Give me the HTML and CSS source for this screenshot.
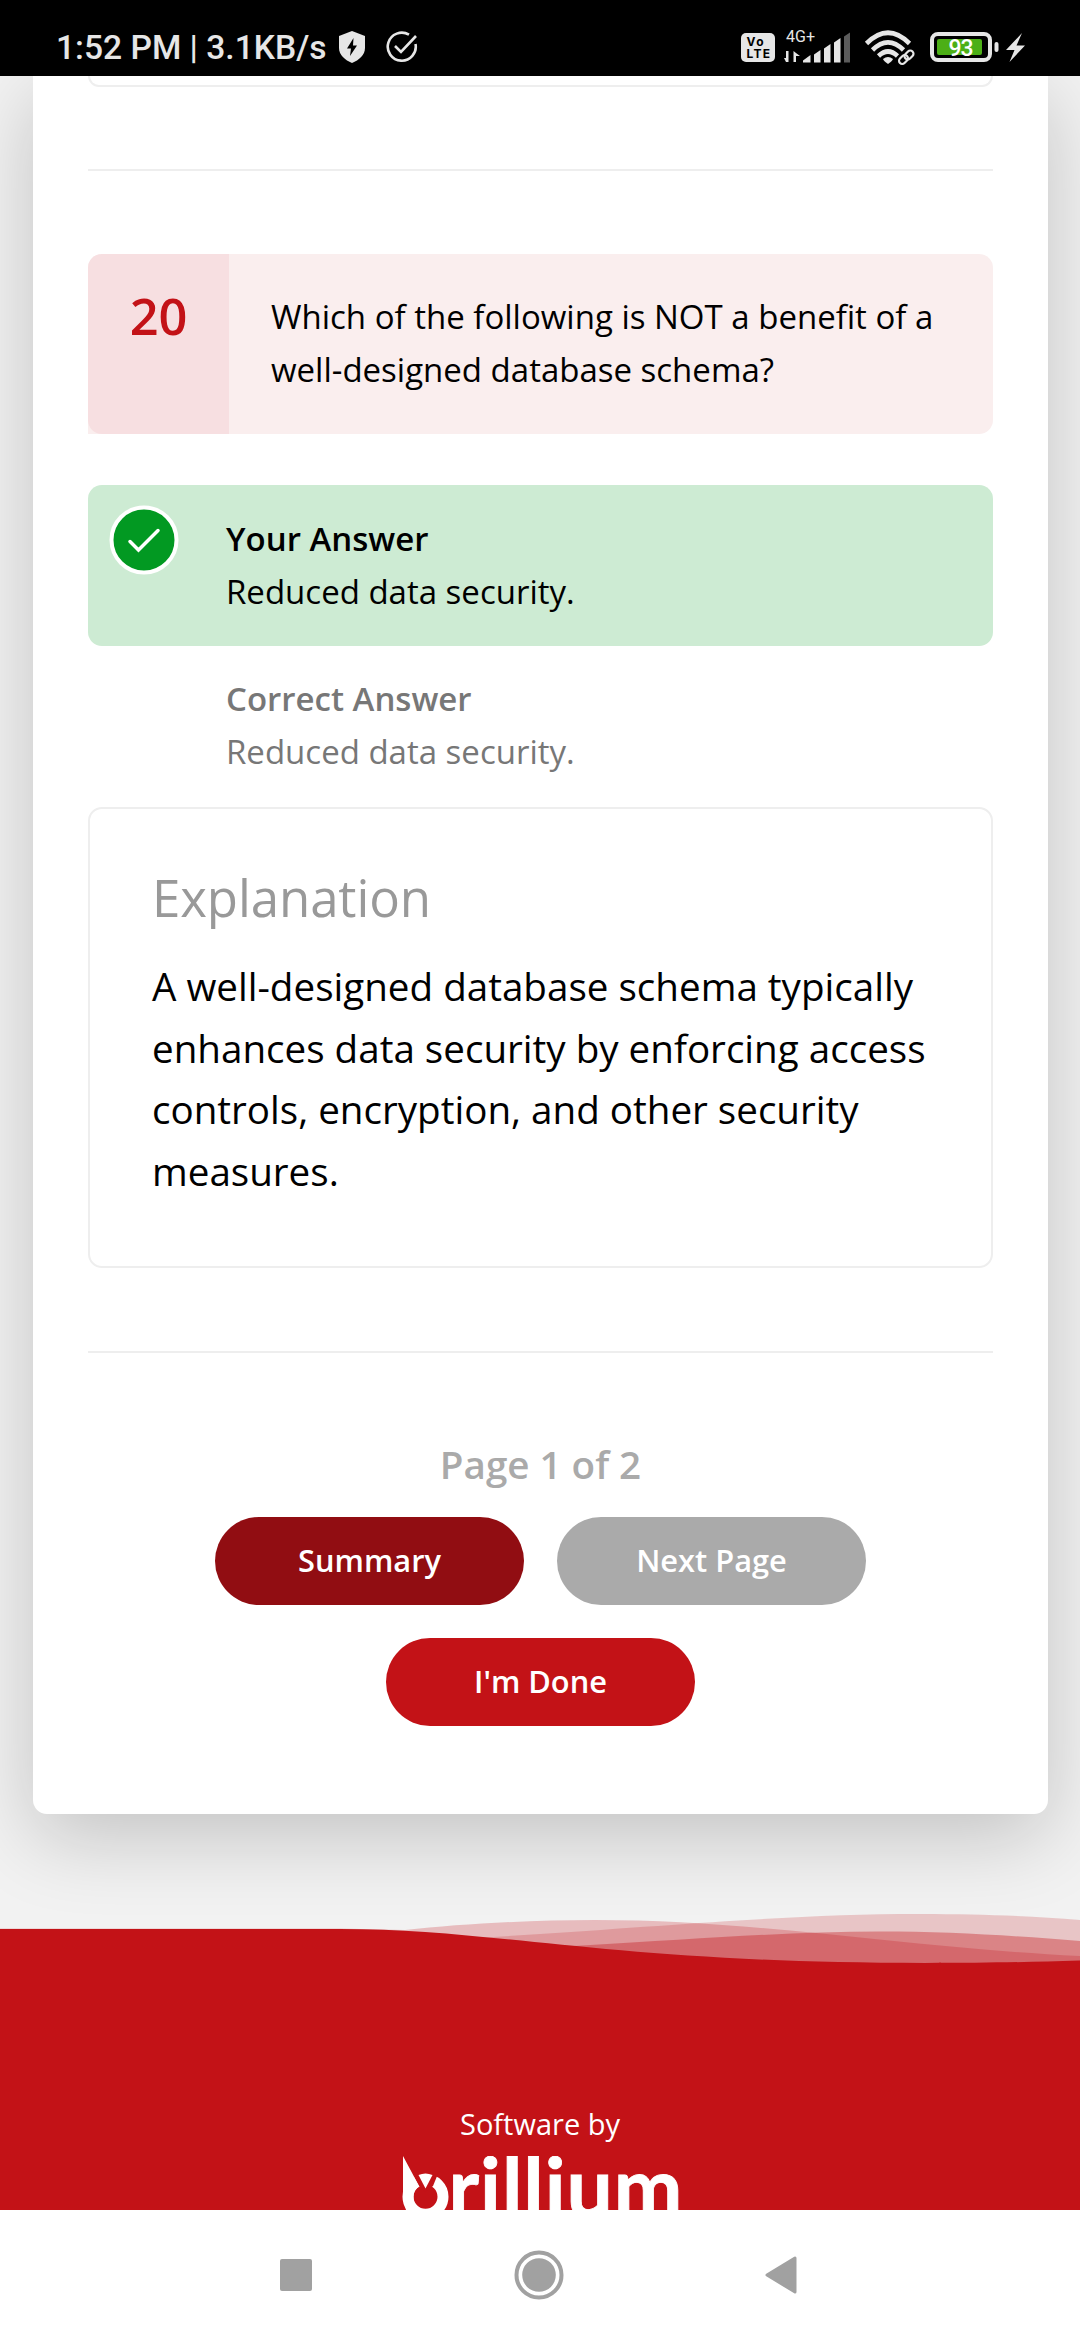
FILE: index.html
```html
<!DOCTYPE html>
<html lang="en">
<head>
<meta charset="utf-8">
<title>Results</title>
<link rel="stylesheet" href="styles.css">
</head>
<body>
<header class="status">
  <span class="clock">1:52 PM | 3.1KB/s</span>
  <svg class="shield" width="28" height="32" viewBox="0 0 28 32"><path d="M14 0 27 5V17C27 24 21 29 14 32 7 29 1 24 1 17V5Z" fill="#e6e6e6"/><path d="M15.5 7 9 17.5H13L12 25 19 14.5H15Z" fill="#000"/></svg>
  <svg class="done" width="32" height="32" viewBox="0 0 32 32" fill="none" stroke="#e6e6e6" stroke-width="2.6"><path d="M23 3.7A14 14 0 1 0 29.5 13"/><path d="m9 15 6 6L30 5"/></svg>
  <svg class="indicators" width="300" height="46" viewBox="0 0 300 46">
    <rect x="6" y="11" width="34" height="29" rx="5" fill="#e6e6e6"/>
    <text class="volte" x="11.5" y="23.600" textLength="17">Vo</text>
    <text class="volte" x="11.5" y="36.300" textLength="23.500">LTE</text>
    <text class="net" x="51" y="20" textLength="29">4G+</text>
    <g fill="#e6e6e6">
      <path d="M53.500 29V40H51L49 36H51V29ZM58.500 40V29L61 31 65 34H61V40ZM68 38.500 75.500 33V40.500H68ZM79 32.500 85.500 28V40.500H79ZM89 26.500 95.500 22V40.500H89ZM99 20.500 105.500 16V40.500H99Z"/>
      <path d="M109 14.500 115 10.500V40.500H109Z" fill="#5c5c5c"/>
    </g>
    <g fill="none" stroke="#e6e6e6" stroke-width="4.600">
      <path d="M131.500 21.500Q153 0 174.500 21.500M137.500 28Q153 12.500 168.500 28M143.500 34Q153 25 162.500 34"/>
    </g>
    <path d="M148 37Q153 33 158 37Q157.500 39 153 42Q148.500 39 148 37Z" fill="#e6e6e6"/>
    <g fill="none" stroke="#000" stroke-width="5"><rect x="-5" y="-3.200" width="10" height="6.400" rx="3.200" transform="translate(168.500 37.500) rotate(-45)"/><rect x="-5" y="-3.200" width="10" height="6.400" rx="3.200" transform="translate(174 33) rotate(-45)"/></g>
    <g fill="none" stroke="#e6e6e6" stroke-width="2.200"><rect x="-5" y="-3.200" width="10" height="6.400" rx="3.200" transform="translate(168.500 37.500) rotate(-45)"/><rect x="-5" y="-3.200" width="10" height="6.400" rx="3.200" transform="translate(174 33) rotate(-45)"/></g>
    <rect x="197" y="12" width="58" height="26" rx="6" fill="none" stroke="#e6e6e6" stroke-width="4"/>
    <rect x="202" y="17" width="45" height="16" rx="2" fill="#4caf16"/>
    <rect x="259.500" y="20" width="4" height="10" rx="2" fill="#e6e6e6"/>
    <text class="level" x="213.500" y="33.500" textLength="25">93</text>
    <path d="M287 11 271 28h8.500L274.500 40 290 23.500h-8.500z" fill="#e6e6e6"/>
  </svg>
</header>
<main class="page">
  <section class="card">
    <div class="prev-box"></div>
    <hr class="rule">
    <div class="question">
      <div class="number">20</div>
      <p class="prompt">Which of the following is NOT a benefit of a well-designed database schema?</p>
    </div>
    <div class="answer answer-right">
      <svg class="tick" width="70" height="70" viewBox="0 0 70 70"><circle cx="35" cy="35" r="32.500" fill="#029922" stroke="#fff" stroke-width="4"/><path d="m21 36.500 8.500 8.500L49 25.500" fill="none" stroke="#fff" stroke-width="3.500" stroke-linecap="round"/></svg>
      <div><strong class="label">Your Answer</strong><p class="text">Reduced data security.</p></div>
    </div>
    <div class="answer answer-key">
      <div><strong class="label">Correct Answer</strong><p class="text">Reduced data security.</p></div>
    </div>
    <article class="explanation">
      <h2 class="heading">Explanation</h2>
      <p class="body">A well-designed database schema typically enhances data security by enforcing access controls, encryption, and other security measures.</p>
    </article>
    <hr class="rule rule-end">
    <div class="pager">Page 1 of 2</div>
    <div class="buttons">
      <button class="btn btn-dark">Summary</button>
      <button class="btn btn-off">Next Page</button>
      <button class="btn">I'm Done</button>
    </div>
  </section>
</main>
<footer class="footer">
  <svg class="wave" width="1080" height="60" viewBox="0 0 1080 60" fill="#c31217">
    <path fill-opacity=".24" d="M0 17.500H340L405 19C460 13 530 9 595 9 760 9 900 36 1080 45V60H0Z"/>
    <path fill-opacity=".2" d="M460 28 540 23C690 13 800 3 920 3 980 3 1030 5 1080 9V60H460Z"/>
    <path fill-opacity=".36" d="M560 36 582 34.500C700 28 790 20.500 880 20.500 950 20.500 1020 25 1080 30V60H560Z"/>
    <path d="M0 18H340C500 18 610 52 925 52 990 52 1030 51 1080 49.500V60H0Z"/>
  </svg>
  <div class="credit">
    <span class="by">Software by</span>
    <svg class="logo" width="280" height="54" viewBox="0 0 280 54">
      <circle cx="25.500" cy="40.700" r="17.500" fill="none" stroke="#fff" stroke-width="11"/>
      <path d="M10 14H39.500L33 30 25.500 36 19 30Z" fill="#c31217"/>
      <path d="M3 0 19.300 30.500Q13.500 34 13.500 40.700L14 54H6L3 42Z" fill="#fff"/>
      <path d="M18.500 19Q25.500 16 32.500 19L25.500 32.500Z" fill="#fff"/>
      <text class="word" x="48.500" y="61" textLength="234">rillium</text>
    </svg>
  </div>
</footer>
<nav class="navbar">
  <svg width="34" height="34" viewBox="0 0 34 34"><rect x="1" y="1" width="32" height="32" rx="2" fill="#a1a1a1"/></svg>
  <svg width="50" height="50" viewBox="0 0 50 50"><circle cx="25" cy="25" r="22.500" fill="none" stroke="#a1a1a1" stroke-width="4"/><circle cx="25" cy="25" r="16.800" fill="#a1a1a1"/></svg>
  <svg width="34" height="38" viewBox="0 0 34 38"><path d="M3 19 31 2V36Z" fill="#a1a1a1" stroke="#a1a1a1" stroke-width="3" stroke-linejoin="round"/></svg>
</nav>
</body>
</html>
```
FILE: styles.css
```css
* { box-sizing: border-box; }
body { margin: 0; width: 1080px; height: 2340px; display: flex; flex-direction: column; overflow: hidden; background: #f2f2f2; color: #000; font-family: "Open Sans", sans-serif; }
p, h2, hr { margin: 0; }
svg { display: block; flex: none; }
.status { flex: none; height: 76px; background: #000; display: flex; align-items: flex-start; position: relative; z-index: 1; }
.clock { width: 337px; padding-left: 56px; margin-top: 28px; font: 500 33.6px/40px Roboto, sans-serif; color: #e6e6e6; white-space: nowrap; flex: none; }
.shield { margin: 31px 0 0 1px; }
.done { margin: 31px 0 0 20px; }
.indicators { margin: 22px 45px 0 auto; }
.volte { font: 700 12px Inter, sans-serif; fill: #000; }
.net { font: 400 16px Roboto, sans-serif; fill: #e6e6e6; }
.level { font: 500 23px Roboto, sans-serif; fill: #fff; }
.page { flex: none; padding: 0 32px 0 33px; }
.card { height: 1738px; padding: 0 55px; background: #fff; border-radius: 0 0 14px 14px; box-shadow: 0 22px 82px rgba(0, 0, 0, .2); }
.prev-box { height: 11px; border: 2px solid #eee; border-top: 0; border-radius: 0 0 14px 14px; }
.rule { height: 2px; border: 0; background: #eee; margin-top: 82px; }
.question { margin-top: 83px; height: 180px; display: flex; background: #faeeee; border-radius: 14px 14px 14px 0; }
.number { width: 141px; padding-top: 27px; text-align: center; background: #f7dfe1; border-radius: 14px 0 0 14px; color: #c31217; font-size: 50.5px; font-weight: 600; line-height: 70px; }
.prompt { padding: 36px 0 0 42px; flex: 1; font-size: 33px; line-height: 53px; }
.answer { height: 161px; padding: 27px 0 0 138px; font-size: 33px; line-height: 53px; position: relative; border-radius: 14px; }
.answer-right { margin-top: 51px; background: #cdebd3; }
.answer-key { padding-top: 26px; color: #777; }
.label { font-weight: 600; }
.tick { position: absolute; left: 21px; top: 20px; }
.explanation { height: 461px; border: 2px solid #eee; border-radius: 14px; padding: 52px 45px 0 62px; }
.heading { font-weight: 400; font-size: 51px; line-height: 72px; letter-spacing: -.1px; color: #999; }
.body { margin-top: 23px; font-size: 38.6px; line-height: 61.7px; }
.rule-end { margin-top: 83px; }
.pager { margin-top: 84px; text-align: center; font-size: 38.6px; line-height: 54px; font-weight: 600; color: #aaa; }
.buttons { margin-top: 26px; display: flex; flex-wrap: wrap; justify-content: center; gap: 33px; }
.btn { width: 309px; height: 88px; border: 0; border-radius: 44px; background: #c31217; color: #fff; font: 600 30.8px/40px "Open Sans", sans-serif; padding: 0 0 3px; }
.btn-dark { background: #910d12; }
.btn-off { background: #aaa; }
.footer { flex: none; height: 299px; margin-top: 97px; position: relative; z-index: 1; overflow: hidden; display: flex; flex-direction: column; }
.wave { height: 60px; }
.credit { flex: 1; background: #c31217; display: flex; flex-direction: column; align-items: center; padding-top: 133px; }
.by { height: 52px; font-size: 29px; line-height: 40px; color: #fff; }
.word { font: 700 82px Lato, sans-serif; fill: #fff; stroke: #fff; stroke-width: .8px; }
.navbar { height: 130px; background: #fff; display: flex; align-items: center; justify-content: space-between; padding: 0 282px 0 279px; position: relative; z-index: 2; }
```
